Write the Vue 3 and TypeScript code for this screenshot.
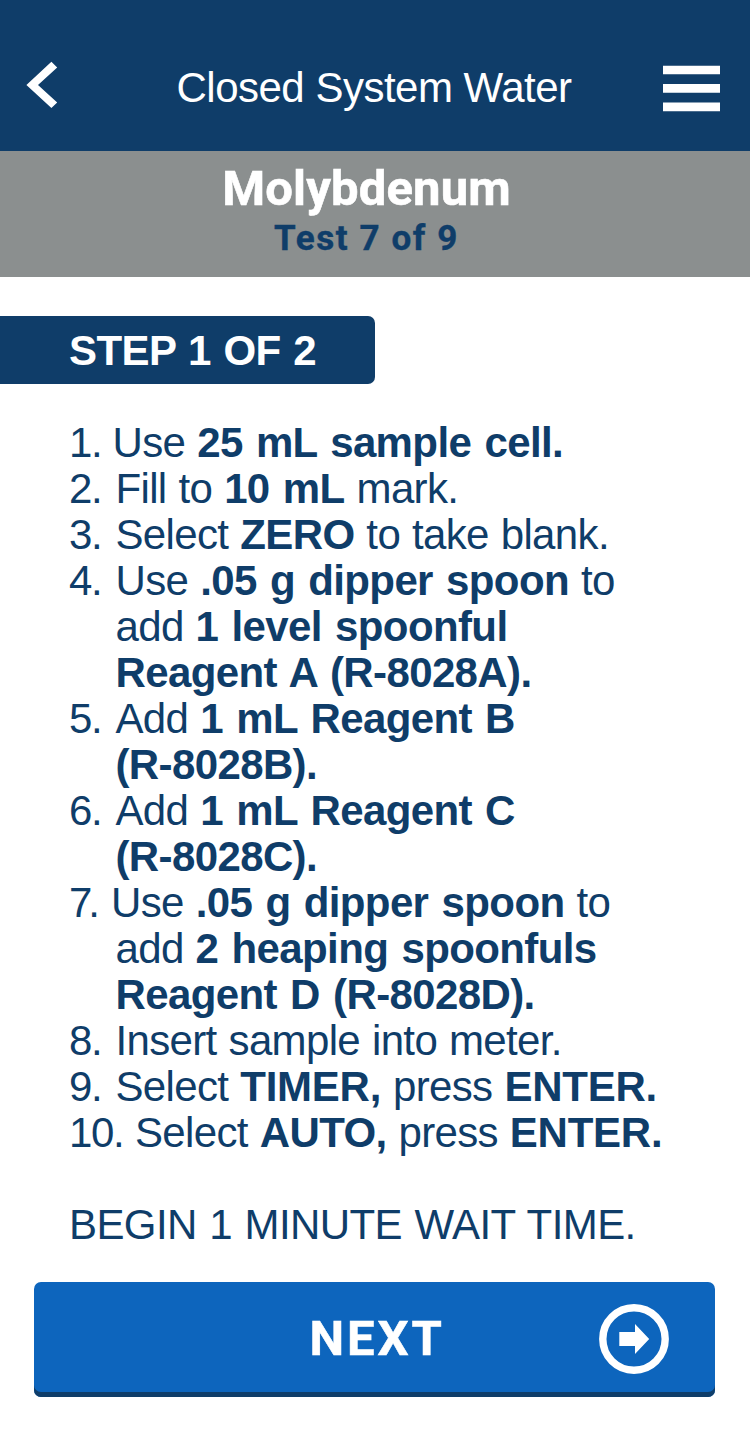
<script setup lang="ts">
interface Segment {
  text: string
  bold?: boolean
  caps?: boolean
}
interface Line {
  num?: string
  kind?: string
  segments: Segment[]
}

const lines: Line[] = [
  { num: '1.', kind: 'one', segments: [{ text: 'Use ' }, { text: '25 mL sample cell.', bold: true }] },
  { num: '2.', segments: [{ text: 'Fill to ' }, { text: '10 mL', bold: true }, { text: ' mark.' }] },
  { num: '3.', segments: [{ text: 'Select ' }, { text: 'ZERO', bold: true }, { text: ' to take blank.' }] },
  { num: '4.', segments: [{ text: 'Use ' }, { text: '.05 g dipper spoon', bold: true }, { text: ' to' }] },
  { segments: [{ text: 'add ' }, { text: '1 level spoonful', bold: true }] },
  { segments: [{ text: 'Reagent A (R-8028A).', bold: true }] },
  { num: '5.', segments: [{ text: 'Add ' }, { text: '1 mL Reagent B', bold: true }] },
  { segments: [{ text: '(R-8028B).', bold: true }] },
  { num: '6.', segments: [{ text: 'Add ' }, { text: '1 mL Reagent C', bold: true }] },
  { segments: [{ text: '(R-8028C).', bold: true }] },
  { num: '7.', kind: 'seven', segments: [{ text: 'Use ' }, { text: '.05 g dipper spoon', bold: true }, { text: ' to' }] },
  { segments: [{ text: 'add ' }, { text: '2 heaping spoonfuls', bold: true }] },
  { segments: [{ text: 'Reagent D (R-8028D).', bold: true }] },
  { num: '8.', segments: [{ text: 'Insert sample into meter.' }] },
  { num: '9.', segments: [{ text: 'Select ' }, { text: 'TIMER,', bold: true, caps: true }, { text: ' press ' }, { text: 'ENTER.', bold: true, caps: true }] },
  { num: '10.', kind: 'ten', segments: [{ text: 'Select ' }, { text: 'AUTO,', bold: true }, { text: ' press ' }, { text: 'ENTER.', bold: true, caps: true }] },
]
</script>

<template>
  <div class="screen">
    <header class="topbar">
      <svg class="back" width="32" height="48" viewBox="0 0 32 48">
        <path d="M25.4 1.8 31.2 7.4 12 24.9 31.2 42.4 25.4 48 .4 24.9Z" fill="#fff" />
      </svg>
      <h1 class="title">Closed System Water</h1>
      <svg class="menu" width="57" height="47" viewBox="0 0 57 47">
        <path d="M0 .7H57V9.2H0ZM0 19.1H57V27.7H0ZM0 37.5H57V46.2H0Z" fill="#fff" />
      </svg>
    </header>
    <section class="banner">
      <div class="analyte">Molybdenum</div>
      <div class="progress">Test 7 of 9</div>
    </section>
    <div class="step">STEP 1 OF 2</div>
    <main class="instructions">
      <div v-for="(line, i) in lines" :key="i" class="line">
        <span class="num" :class="line.kind">{{ line.num }}</span>
        <span class="copy"><span v-for="(s, j) in line.segments" :key="j" :class="{ bold: s.bold, caps: s.caps }">{{ s.text }}</span></span>
      </div>
      <div class="line wait">BEGIN 1 MINUTE WAIT TIME.</div>
    </main>
    <button class="next" type="button">
      <span class="label">NEXT</span>
      <svg class="arrow" width="70" height="70" viewBox="0 0 70 70">
        <circle cx="35" cy="35" r="31.2" fill="none" stroke="#fff" stroke-width="7.4" />
        <path d="M20.3 28H36V20L50.2 35 36 50V42H20.3Z" fill="#fff" />
      </svg>
    </button>
  </div>
</template>

<style>
body {
  background: #fff;
}
</style>

<style scoped>
.screen {
  width: 750px;
  height: 1432px;
  overflow: hidden;
  display: flex;
  flex-direction: column;
  background: #fff;
  color: #0f3d69;
  font-family: "Liberation Sans", Arial, sans-serif;
  font-size: 42px;
}
.topbar {
  height: 151px;
  box-sizing: border-box;
  padding: 60px 30px 0 26px;
  display: flex;
  align-items: flex-start;
  justify-content: space-between;
  background: #0f3d69;
  color: #fff;
}
.title {
  margin: 4px 0 0 27px;
  font-size: 42px;
  line-height: 48px;
  font-weight: 400;
  letter-spacing: -0.5px;
  white-space: nowrap;
}
.menu {
  margin-top: 5px;
}
.banner {
  height: 126px;
  box-sizing: border-box;
  padding: 10px 17px 0 0;
  background: #8b8f8f;
  text-align: center;
  font-family: Roboto, sans-serif;
  font-weight: 700;
}
.analyte {
  color: #fff;
  font-size: 49px;
  line-height: 56px;
  letter-spacing: 0.15px;
  -webkit-text-stroke: 0.6px currentColor;
}
.progress {
  padding-top: 1px;
  font-size: 35px;
  line-height: 42px;
  letter-spacing: 1.6px;
  -webkit-text-stroke: 0.4px currentColor;
}
.step {
  width: 375px;
  height: 68px;
  box-sizing: border-box;
  margin-top: 39px;
  padding-left: 69px;
  border-radius: 0 7px 7px 0;
  background: #0f3d69;
  color: #fff;
  font-weight: 700;
  line-height: 69px;
  letter-spacing: -0.6px;
  word-spacing: 1.5px;
}
.instructions {
  margin: 36px 0 0 69px;
  line-height: 46px;
  letter-spacing: -0.65px;
  word-spacing: 0.9px;
}
.line {
  display: flex;
  height: 46px;
  white-space: pre;
}
.num {
  width: 46.5px;
  flex: none;
  letter-spacing: -1.4px;
}
.num.one {
  width: 43.5px;
}
.num.seven {
  width: 42px;
  letter-spacing: -4px;
}
.num.ten {
  width: 66px;
}
.bold {
  font-weight: 700;
  letter-spacing: -0.62px;
  word-spacing: 2.2px;
}
.bold.caps {
  letter-spacing: -0.25px;
}
.wait {
  margin-top: 46px;
  letter-spacing: -0.6px;
  word-spacing: 1.5px;
}
.next {
  width: 681px;
  height: 115px;
  box-sizing: border-box;
  margin: 34px 0 0 34px;
  padding: 0 46px 1px 275.5px;
  display: flex;
  align-items: center;
  justify-content: space-between;
  border: 0;
  border-radius: 7px;
  background: #0d65bd;
  box-shadow: inset 0 -5px #0f3d69;
  color: #fff;
}
.label {
  font: 700 49px/60px Roboto, sans-serif;
  letter-spacing: 2.9px;
  -webkit-text-stroke: 0.5px currentColor;
}
</style>
